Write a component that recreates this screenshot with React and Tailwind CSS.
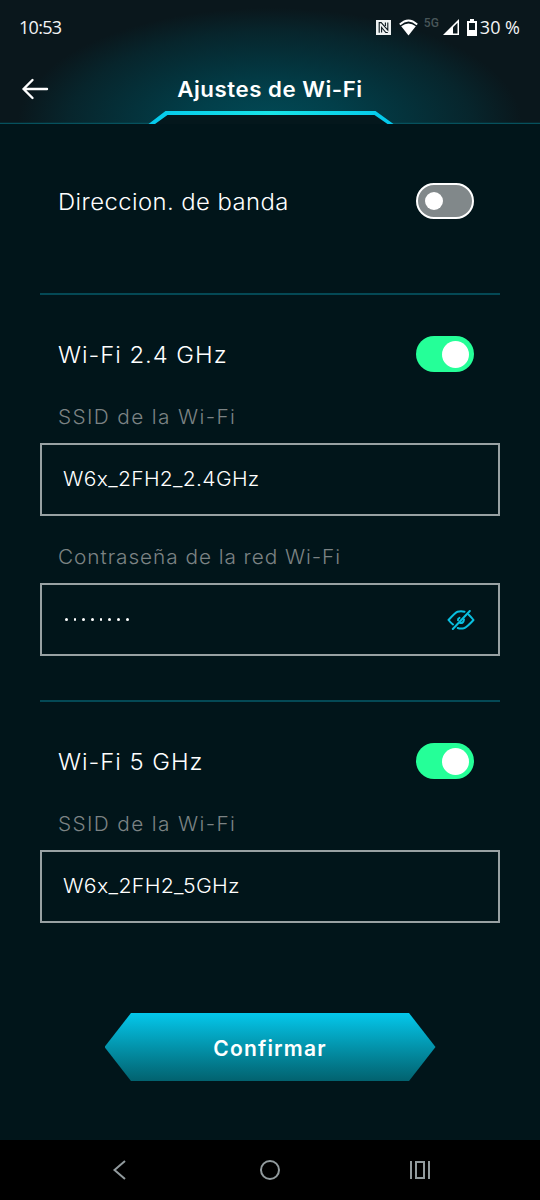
// App.jsx
import React, { useState } from "react";

const StatusBar = () => (
    <div className="flex h-[54px] items-center justify-between pl-[19px] pr-5">
        <span className="font-['Open_Sans',sans-serif] text-[18px] tracking-[-0.7px] text-gray-100">10:53</span>
        <div className="flex items-center text-gray-100">
            {/* NFC */}
            <svg width="15" height="15" viewBox="0 0 15 15" className="mr-[8px]">
                <path d="M0 0h15v15H0z" fill="#eef2f2" />
                <path d="M3.200 12.800V2.600H5.200L11.800 10V2.500M11.800 12.500H9.800L5.600 7.500V12.500M9.400 2.500V6" fill="none" stroke="#0a181d" strokeWidth="1.100" />
            </svg>
            {/* Wi-Fi */}
            <svg width="19" height="17" viewBox="0 0 19 17" className="mr-[6px]">
                <path d="M.8 5.500Q9.500-2.500 18.200 5.500" fill="none" stroke="#fff" strokeWidth="1.800" />
                <path d="M2.200 7.300Q9.500 1.500 16.800 7.300L9.500 16.500z" fill="#fff" />
            </svg>
            <span className="relative -top-1 mr-[4px] font-[Roboto,sans-serif] text-[12px] font-medium leading-none text-[#485659]">5G</span>
            <svg width="16" height="16" viewBox="0 0 16 16" className="mr-2">
                <path d="M0 16L16 0v16z" fill="#fff" />
                <path d="M10 8.300L14.500 3.800V14.500H10z" fill="#0a181d" />
            </svg>
            <svg width="10" height="17" viewBox="0 0 10 17" className="mr-[3px]">
                <path d="M3 0h4v2h3v15H0V2h3z" fill="#fff" />
                <path d="M2 4h6v7H2z" fill="#0a181d" />
            </svg>
            <span className="font-['Open_Sans',sans-serif] text-[18px] leading-none">30 %</span>
        </div>
    </div>
);

const Header = () => (
    <header className="relative h-[124px] bg-[#0a171c] bg-[radial-gradient(ellipse_252px_116px_at_270px_124px,#014a56_0%,#023f4a_30%,#04323b_55%,#07252c_80%,#0a171c_100%)]">
        <StatusBar />
        <div className="grid h-[70px] grid-cols-[70px_1fr_70px] items-center">
            <button className="pl-[21px]">
                <svg width="28" height="22" viewBox="0 0 28 22" fill="none" stroke="#fff" strokeWidth="2.400" strokeLinecap="round" strokeLinejoin="round">
                    <path d="M11.500 2L2.500 11l9 9M2.500 11H26" />
                </svg>
            </button>
            <h1 className="scale-x-[1.06] text-center text-[21px] font-semibold leading-none tracking-[0.5px] text-white">Ajustes de Wi-Fi</h1>
        </div>
        {/* Neon tab under the title */}
        <svg className="absolute bottom-0 left-0" width="540" height="16" viewBox="0 0 540 16">
            <defs>
                <linearGradient id="tab" x1="0" x2="1">
                    <stop offset="0" stopColor="#04c8ec" />
                    <stop offset=".5" stopColor="#18e5e8" />
                    <stop offset="1" stopColor="#04c8ec" />
                </linearGradient>
            </defs>
            <path d="M152 16L166 5H376L390 16z" fill="#04171c" />
            <path d="M0 15.500H150M391 15.500H540" stroke="#06515d" strokeWidth="1.500" />
            <path d="M148.500 16L165.500 3H375.500L393.500 16H387.500L374.500 7H167.500L155 16z" fill="url(#tab)" />
        </svg>
    </header>
);

const Toggle = ({ on, onClick }) => (
    <button
        onClick={onClick}
        className={`flex h-9 w-[58px] items-center rounded-full ${on ? "justify-end bg-[#25ff98] pr-[5px]" : "justify-start border-2 border-white bg-[#81888a] pl-[7px]"
            }`}
    >
        <span className={`rounded-full bg-white ${on ? "h-[27px] w-[27px]" : "h-[18px] w-[18px]"}`} />
    </button>
);

const ToggleRow = ({ label, initial, spacing }) => {
    const [on, setOn] = useState(initial);

    return (
        <div className="flex h-9 items-center justify-between pl-[18px] pr-[26px]">
            <span className={`origin-left scale-x-[1.06] pt-[2px] text-[22.5px] font-light text-white ${spacing}`}>{label}</span>
            <Toggle on={on} onClick={() => setOn(!on)} />
        </div>
    );
};

const Field = ({ label, labelSpacing, children }) => (
    <div>
        <p className="flex h-[26px] items-center pl-[18px] text-[20px] font-light text-[#7c8384]">
            <span className={`origin-left scale-x-[1.04] ${labelSpacing}`}>{label}</span>
        </p>
        <div className="mt-[13px] flex h-[73px] items-center justify-between border-2 border-[#98a1a3] pl-[21px] pr-[23px] text-[19.5px] font-light text-white">
            {children}
        </div>
    </div>
);

const EyeOff = () => (
    <svg width="28" height="20" viewBox="0 0 28 20" fill="none" stroke="#09bfe0" strokeWidth="2" strokeLinecap="round" strokeLinejoin="round">
        <path d="M17.500 1.700Q14 .6 10.500 1.700Q8.500 2.300 1.500 10Q3.500 12.500 6 14.500" />
        <path d="M21.500 4.500Q24 6.800 26.500 10Q20 17 17.500 18Q14 19.200 10.700 18" />
        <path d="M5.800 19L22.800 1" />
        <path d="M11 10.200Q10.800 8.500 12.500 7.800M13 13Q16.500 13.500 17 9.500" />
    </svg>
);

const Divider = ({ className }) => <div className={`h-[2px] bg-[#044955] ${className}`} />;

const App = () => (
    <div className="flex h-[1200px] w-[540px] flex-col bg-[#01151a] font-[Inter,sans-serif]">
        <Header />

        <main className="flex flex-1 flex-col px-10 pt-[59px]">
            <ToggleRow label="Direccion. de banda" initial={false} spacing="tracking-[0.4px]" />
            <Divider className="mt-[74px]" />

            <div className="mt-[41px]">
                <ToggleRow label="Wi-Fi 2.4 GHz" initial={true} spacing="tracking-[0.9px]" />
            </div>
            <div className="mt-8 flex flex-col gap-7">
                <Field label="SSID de la Wi-Fi" labelSpacing="tracking-[1.3px]">
                    <span className="origin-left scale-x-[1.08] tracking-[0.3px]">W6x_2FH2_2.4GHz</span>
                </Field>
                <Field label="Contraseña de la red Wi-Fi" labelSpacing="tracking-[0.9px]">
                    <span className="flex gap-[6px] pl-[2px]">
                        {Array.from({ length: 8 }).map((_, i) => (
                            <span key={i} className="h-[2.7px] w-[2.7px] rounded-full bg-white" />
                        ))}
                    </span>
                    <EyeOff />
                </Field>
            </div>
            <Divider className="mt-11" />

            <div className="mt-[41px]">
                <ToggleRow label="Wi-Fi 5 GHz" initial={true} spacing="tracking-[0.9px]" />
            </div>
            <div className="mt-8">
                <Field label="SSID de la Wi-Fi" labelSpacing="tracking-[1.3px]">
                    <span className="origin-left scale-x-[1.09] tracking-[0.3px]">W6x_2FH2_5GHz</span>
                </Field>
            </div>

            <button className="mt-[90px] h-[68px] w-[331px] self-center bg-linear-to-b from-[#04c8ec] to-[#02626f] pt-[3px] text-[21px] font-semibold tracking-[1.200px] text-white [clip-path:polygon(8%_0,92%_0,100%_50%,92%_100%,8%_100%,0_50%)]">
                Confirmar
            </button>
        </main>

        <nav className="flex h-[60px] items-center justify-between bg-black px-[109px]">
            <svg width="22" height="20" viewBox="0 0 22 20" fill="none" stroke="#929b9e" strokeWidth="2">
                <path d="M16 1L5.500 10L16 19" />
            </svg>
            <svg width="22" height="22" viewBox="0 0 22 22" fill="none" stroke="#929b9e" strokeWidth="2">
                <circle cx="11" cy="11" r="9" />
            </svg>
            <svg width="22" height="20" viewBox="0 0 22 20" fill="none" stroke="#929b9e" strokeWidth="2">
                <path d="M2 1v18M20 1v18M7 2h8v16H7z" />
            </svg>
        </nav>
    </div>
);

export default App;
